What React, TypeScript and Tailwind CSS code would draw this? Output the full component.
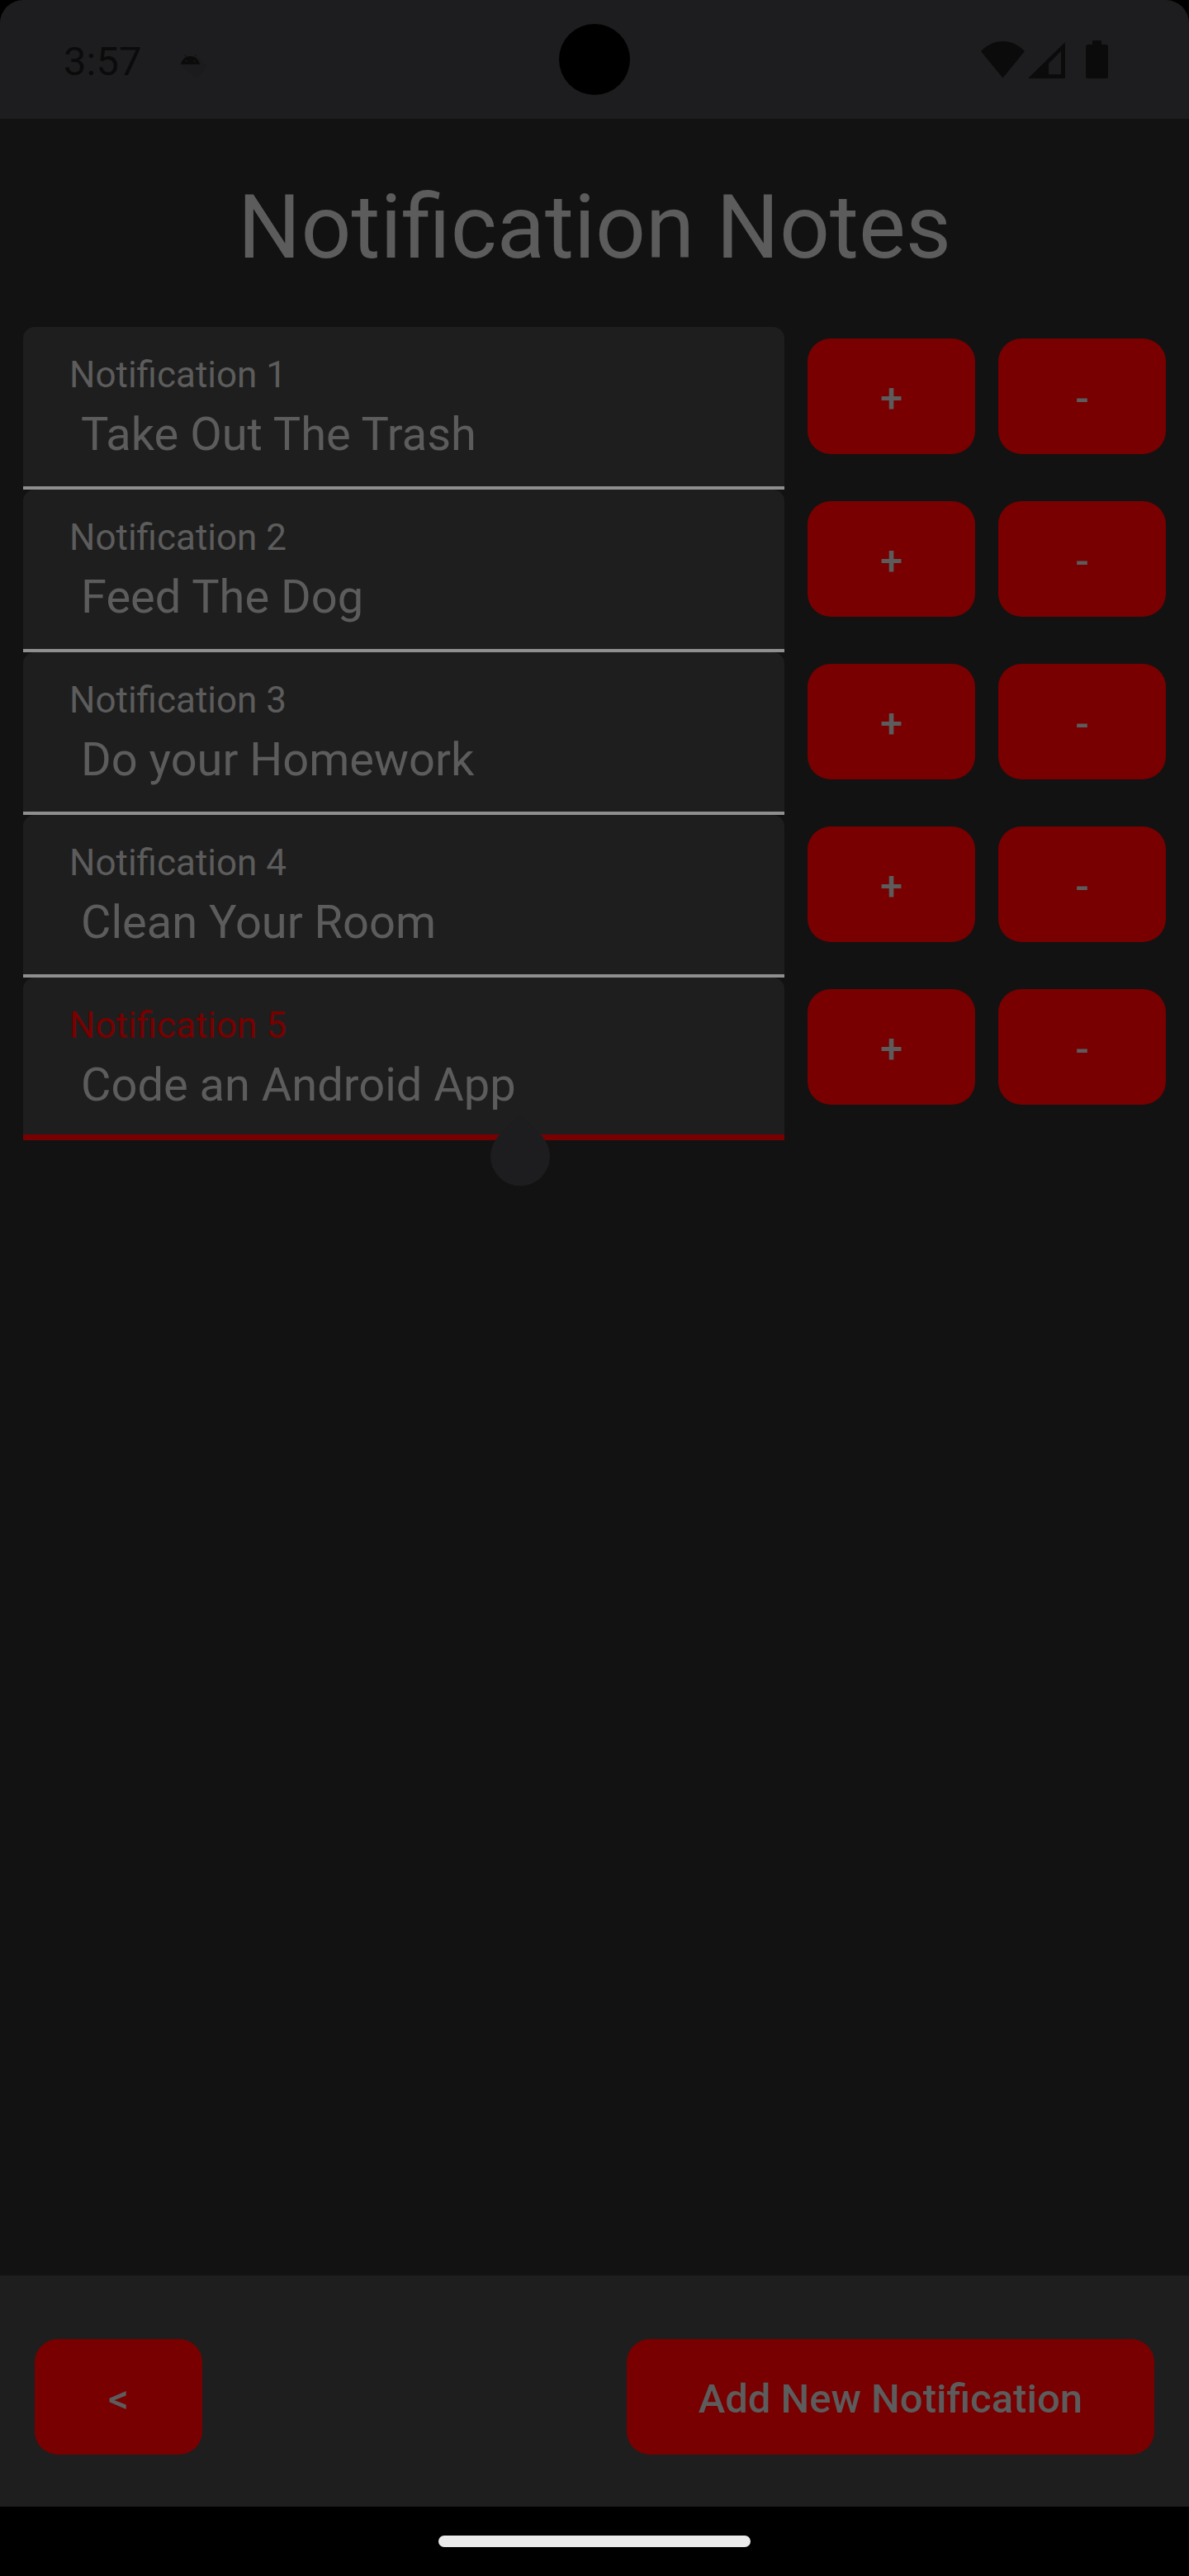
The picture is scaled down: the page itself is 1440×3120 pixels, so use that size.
import React from "react";

type Note = { id: number; text: string; active?: boolean };

const notes: Note[] = [
  { id: 1, text: "Take Out The Trash" },
  { id: 2, text: "Feed The Dog" },
  { id: 3, text: "Do your Homework" },
  { id: 4, text: "Clean Your Room" },
  { id: 5, text: "Code an Android App", active: true },
];

function ActionButton({
  children,
  label,
  className,
}: {
  children: React.ReactNode;
  label?: string;
  className: string;
}) {
  return (
    <button
      type="button"
      aria-label={label}
      className={`h-[140px] shrink-0 rounded-[28px] bg-[#780000] pt-1 text-[49px] leading-[57px] font-medium text-[#5c5c5c] ${className}`}
    >
      {children}
    </button>
  );
}

function StatusBar() {
  return (
    <div className="bg-black">
      <div className="relative flex h-36 items-center justify-between rounded-t-[28px] bg-[#1d1d1f] pr-[98px] pl-[77px]">
        <div className="flex items-center gap-12">
          <span className="pt-1 text-[49px] leading-[57px] text-[#0b0b0b]">3:57</span>
          <svg width="36" height="46" viewBox="0 0 36 46" aria-hidden="true">
            <path d="M0 29 L22 20 L31 31 L20 46 L15 43Z" fill="#1b1b1d" />
            <path d="M0 29 C1 23 6 19 11.500 19 C17 19 22 23 23 29Z" fill="#0b0b0b" />
            <path d="M4.500 17 L7 21 M18.500 17 L16 21" stroke="#0f0f10" strokeWidth="1" />
            <circle cx="6.500" cy="25" r="1" fill="#1d1d1f" />
            <circle cx="16.500" cy="25" r="1" fill="#1d1d1f" />
          </svg>
        </div>
        <div className="absolute top-[29px] left-1/2 size-[86px] -translate-x-1/2 rounded-full bg-black" />
        <div className="flex items-center text-[#0b0b0b]">
          <svg width="53" height="46" viewBox="0 0 53 46" aria-hidden="true" className="mr-1">
            <path d="M0 13 C15 -3 38 -3 53 13 L26.500 45.500Z" fill="currentColor" />
          </svg>
          <svg width="45" height="46" viewBox="0 0 45 46" aria-hidden="true" className="mr-[25px]">
            <path
              fillRule="evenodd"
              d="M0 46 L45 2 V46Z M25 28 V41 H40 V13Z"
              fill="currentColor"
            />
          </svg>
          <svg width="27" height="46" viewBox="0 0 27 46" aria-hidden="true">
            <path
              d="M8 0 H19 V5 H24.500 Q27 5 27 7.500 V43.500 Q27 46 24.500 46 H2.500 Q0 46 0 43.500 V7.500 Q0 5 2.500 5 H8Z"
              fill="currentColor"
            />
          </svg>
        </div>
      </div>
    </div>
  );
}

function NoteRow({ note }: { note: Note }) {
  const id = `note-${note.id}`;
  return (
    <li className="flex items-start gap-7">
      <div className="relative flex h-[197px] min-w-0 flex-1 flex-col">
        <div className="flex flex-1 flex-col gap-3.5 rounded-t-[14px] bg-[#1e1e1e] px-14 pt-[34px]">
          <label
            htmlFor={id}
            className={`text-[44px] leading-[49px] ${note.active ? "text-[#780000]" : "text-[#5c5c5c]"}`}
          >
            Notification {note.id}
          </label>
          <input
            id={id}
            type="text"
            defaultValue={note.text}
            className="h-[66px] w-full bg-transparent pl-3.5 text-[56px] leading-[66px] text-[#5c5c5c] outline-none"
          />
        </div>
        <div className={note.active ? "h-[7px] bg-[#780000]" : "h-1 bg-[#8f8f8f]"} />
        {/* text cursor handle hanging below the focused field */}
        {note.active && (
          <svg
            width="72"
            height="88"
            viewBox="0 0 72 88"
            aria-hidden="true"
            className="absolute top-[165px] left-[566px]"
          >
            <path d="M36 0 L61.500 26 A36 36 0 1 1 10.500 26Z" fill="#1d1d1f" />
          </svg>
        )}
      </div>
      <div className="flex gap-7 pt-3.5">
        <ActionButton label={`Add notification ${note.id}`} className="w-[203px]">
          +
        </ActionButton>
        <ActionButton label={`Remove notification ${note.id}`} className="w-[203px]">
          -
        </ActionButton>
      </div>
    </li>
  );
}

export default function App() {
  return (
    <div className="flex min-h-screen flex-col bg-[#121212] font-['Roboto',sans-serif]">
      <StatusBar />
      <main className="flex-1 px-7">
        <h1 className="pt-[70px] pb-[59px] text-center text-[107px] leading-[123px] text-[#5c5c5c]">
          Notification Notes
        </h1>
        <ul>
          {notes.map((note) => (
            <NoteRow key={note.id} note={note} />
          ))}
        </ul>
      </main>
      <footer>
        <div className="flex justify-between bg-[#1e1e1e] px-[42px] pt-[77px] pb-[63px]">
          <ActionButton label="Back" className="w-[203px]">
            &lt;
          </ActionButton>
          <ActionButton className="px-[87px]">Add New Notification</ActionButton>
        </div>
        <div className="flex h-[84px] items-center justify-center bg-black">
          <div className="h-3.5 w-[378px] rounded-full bg-[#ebebeb]" />
        </div>
      </footer>
    </div>
  );
}
